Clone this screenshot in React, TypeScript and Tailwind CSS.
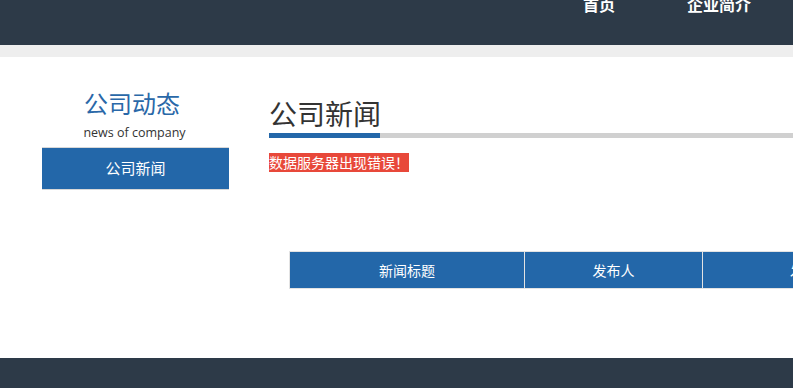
import React from 'react';

const font = { fontFamily: '"Noto Sans CJK SC", "Microsoft YaHei", "Noto Sans", sans-serif' };

export default function App() {
  return (
    <div className="w-[793px] h-[388px] overflow-hidden bg-white flex flex-col" style={font}>
      {/* Header, scrolled so the top is cut */}
      <header className="h-[45px] shrink-0 bg-[#2d3a48] overflow-hidden">
        <div className="flex items-start -mt-[4px]">
          <div className="-mt-[9px] text-[12px] leading-[14px] text-[#8b95a1] w-[580px]">
            欢迎访问本公司官方网站 服务热线
          </div>
          <nav className="flex text-[16px] leading-[16px] font-bold text-white">
            <a className="pl-[3px] w-[107px]">首页</a>
            <a>企业简介</a>
          </nav>
        </div>
      </header>
      <div className="h-[12px] shrink-0 bg-[#eeeeee]" />

      {/* Content */}
      <main className="flex-1 flex overflow-hidden">
        <aside className="ml-[42px] w-[187px] shrink-0 pt-[32px] flex flex-col items-center">
          <h2 className="pr-[7px] text-[24px] leading-[28px] text-[#2a68a8]">公司动态</h2>
          <p className="mt-[8px] pr-[2px] text-[12.5px] leading-[16px] text-[#333]" style={{ fontFamily: '"Open Sans", sans-serif' }}>
            news of company
          </p>
          <div className="mt-[6px] w-full h-[43px] bg-[#2367a9] border-y border-[#d8d8d8] flex items-center justify-center text-[15px] text-white">
            公司新闻
          </div>
        </aside>

        <section className="ml-[40px] flex-1 pt-[38px]">
          <h1 className="text-[28px] leading-[36px] text-[#333]">公司新闻</h1>
          <div className="mt-[2px] h-[5px] bg-[#d0d0d0] flex">
            <div className="w-[111px] bg-[#2367a9]" />
          </div>
          <div className="mt-[15px] inline-block bg-[#e8483a] text-white text-[14px] leading-[19px]">
            数据服务器出现错误！
          </div>
          <table className="mt-[78px] ml-[20px] w-[645px] border-collapse text-[14px] text-white">
            <thead>
              <tr className="h-[37px] bg-[#2367a9]">
                <th className="w-[235px] border border-[#e3e3e3] font-normal">新闻标题</th>
                <th className="w-[178px] border border-[#e3e3e3] font-normal">发布人</th>
                <th className="border border-[#e3e3e3] font-normal">发布时间</th>
              </tr>
            </thead>
          </table>
        </section>
      </main>

      {/* Footer */}
      <footer className="h-[30px] shrink-0 bg-[#2d3a48]" />
    </div>
  );
}
